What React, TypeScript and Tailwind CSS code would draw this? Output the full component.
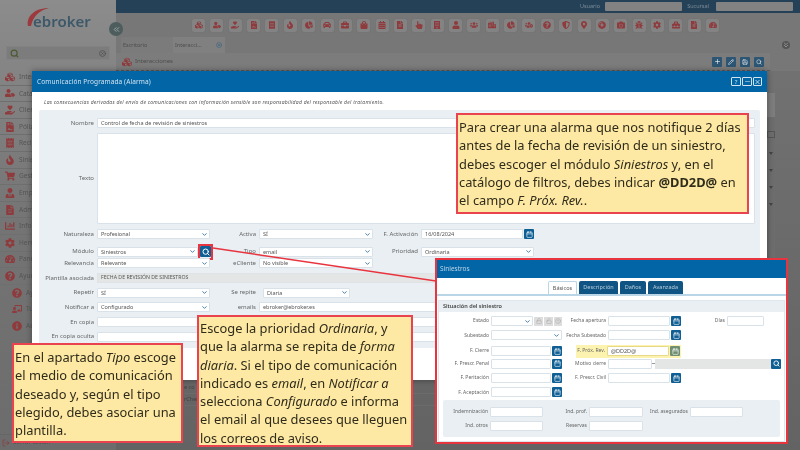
import type { ReactNode } from "react";
import { ChevronDown, Calendar, Search, Lock, Unlock, CircleHelp, X, Minus, Plus, Pencil, Save, ChevronsLeft, ChevronsDown, LogOut, CircleX } from "lucide-react";
import {
  FaCubes, FaUserTag, FaHandHoldingHeart, FaFileContract, FaReceipt, FaFire, FaChartPie, FaCar, FaBriefcase, FaShoppingBag,
  FaCalendarAlt, FaHandPointer, FaBuilding, FaUser, FaUsers, FaCity, FaUsersCog, FaQuestionCircle, FaShieldAlt, FaMapMarkerAlt,
  FaCompactDisc, FaCamera, FaBug, FaCog, FaToolbox, FaFileAlt, FaTachometerAlt, FaChartBar, FaShoppingCart, FaInfoCircle, FaChalkboardTeacher, FaUserTie,
} from "react-icons/fa";

const toolbarIcons = [
  FaCubes, FaUserTag, FaHandHoldingHeart, FaFileContract, FaReceipt, FaFire, FaChartPie, FaCar, FaBriefcase, FaShoppingBag,
  FaCalendarAlt, FaFileAlt, FaHandPointer, FaBuilding, FaUser, FaUsers, FaCity, FaChartPie, FaUsersCog, FaQuestionCircle,
  FaShieldAlt, FaMapMarkerAlt, FaCompactDisc, FaCamera, FaBug, FaCog, FaToolbox, FaFileAlt, FaTachometerAlt,
];

const menu = [
  { icon: FaCubes, label: "Interacciones" },
  { icon: FaUserTag, label: "Catálogos" },
  { icon: FaHandHoldingHeart, label: "Clientes" },
  { icon: FaFileContract, label: "Pólizas" },
  { icon: FaReceipt, label: "Recibos" },
  { icon: FaFire, label: "Siniestros" },
  { icon: FaShoppingCart, label: "Gestión" },
  { icon: FaUserTie, label: "Empresas" },
  { icon: FaFileAlt, label: "Administración" },
  { icon: FaChartBar, label: "Informes" },
  { icon: FaCog, label: "Herramientas" },
  { icon: FaTachometerAlt, label: "Panel" },
  { icon: FaQuestionCircle, label: "Ayuda" },
];

const subMenu = [
  { icon: FaQuestionCircle, label: "Ayuda" },
  { icon: FaChalkboardTeacher, label: "Tutoriales" },
  { icon: FaInfoCircle, label: "Acerca de" },
];

function Select({ value, className = "w-full" }: { value?: string; className?: string }) {
  return (
    <div className={`flex h-[10px] items-center justify-between rounded-[1px] border border-[#d9e2e8] bg-white pl-[3px] pr-[1px] text-[5.5px] text-[#555] ${className}`}>
      <span>{value}</span>
      <ChevronDown size={7} strokeWidth={3} className="text-[#2f6f9f]" />
    </div>
  );
}

function Input({ value, className = "w-full" }: { value?: string; className?: string }) {
  return (
    <div className={`flex h-[10px] items-center rounded-[1px] border border-[#d9e2e8] bg-white pl-[3px] text-[5.5px] text-[#555] ${className}`}>
      {value}
    </div>
  );
}

function IconBtn({ children, className = "" }: { children: ReactNode; className?: string }) {
  return (
    <div className={`flex h-[10px] w-[10px] shrink-0 items-center justify-center rounded-[1px] bg-[#0f5f94] text-white ${className}`}>
      {children}
    </div>
  );
}

function Label({ children }: { children: ReactNode }) {
  return <span className="whitespace-nowrap pr-[3px] text-right text-[6px] text-[#666]">{children}</span>;
}

function ClaimLabel({ children }: { children: ReactNode }) {
  return <span className="whitespace-nowrap pr-[2px] text-right text-[5px] text-[#666]">{children}</span>;
}

const modalRow = "grid h-[10px] grid-cols-[58px_113px_49px_114px_48px_113px] items-center";
const claimRow = "grid h-[10px] grid-cols-[52px_71px_46px_73px_46px_37px] items-center";
const claimAmounts = "grid h-[10px] grid-cols-[47px_53px_46px_54px_47px_53px] items-center";

function DateField({ value }: { value?: string }) {
  return (
    <div className="flex items-center gap-[1px]">
      <Input value={value} />
      <IconBtn>
        <Calendar size={7} />
      </IconBtn>
    </div>
  );
}

function Sidebar() {
  return (
    <aside className="flex w-[116px] shrink-0 flex-col bg-gradient-to-b from-[#8c8c8c] via-[#747474] to-[#6c6c6c]">
      <div className="relative flex h-[46px] shrink-0 pl-[33px] pt-[9px]">
        <svg width="24" height="22" viewBox="0 0 24 22" className="absolute left-[26px] top-[7px]">
          <path d="M2 19C0 10 8 1 23 1C14 3 7 9 5 19Z" fill="#9c3a3d" />
        </svg>
        <span className="text-[15px] font-semibold leading-[24px] text-[#3c5869]">ebroker</span>
      </div>
      <div className="mx-[6px] flex h-[14px] shrink-0 items-center justify-between border border-[#828282] bg-[#7c7c7c] px-[3px]">
        <Search size={9} strokeWidth={3} className="text-[#4a5a30]" />
        <CircleX size={7} className="text-[#444]" />
      </div>
      <nav className="mt-[9px] flex flex-col">
        {menu.map(({ icon: Icon, label }) => (
          <div key={label} className="flex h-[16.6px] items-center gap-[4px] border-b border-[#6f6f6f] pl-[5px] text-[6.5px] text-[#555]">
            <Icon size={10} className="text-[#8f3a3c]" />
            {label}
          </div>
        ))}
        {subMenu.map(({ icon: Icon, label }) => (
          <div key={label} className="flex h-[16.4px] items-center gap-[4px] pl-[12px] text-[6.5px] text-[#555]">
            <Icon size={10} className="text-[#8f3a3c]" />
            {label}
          </div>
        ))}
      </nav>
      <div className="mt-auto flex h-[16px] items-center gap-[3px] border-t border-[#666] pl-[2px] text-[6px] text-[#4c4c4c]">
        <LogOut size={8} className="text-[#8f3a3c]" />
        Cerrar sesión
      </div>
    </aside>
  );
}

function MainBackground() {
  return (
    <main className="flex min-w-0 flex-1 flex-col bg-[#777]">
      <div className="flex h-[13px] shrink-0 items-center justify-end gap-[3px] bg-[#254158] pr-[7px] text-[5.5px] text-[#7d8d9a]">
        <span className="mr-[2px]">Usuario</span>
        <div className="h-[9px] w-[77px] rounded-[1px] bg-[#828282]" />
        <span className="ml-[2px] mr-[4px]">Sucursal</span>
        <div className="h-[9px] w-[77px] rounded-[1px] bg-[#828282]" />
      </div>
      <div className="flex h-[24px] shrink-0 items-center gap-[5.36px] pl-[76px]">
        {toolbarIcons.map((Icon, i) => (
          <div key={i} className="flex h-[13px] w-[13px] items-center justify-center rounded-[2px] bg-[#838383] shadow-[0_0_1px_#666]">
            <Icon size={8} className="text-[#8f3a3c]" />
          </div>
        ))}
      </div>
      <div className="flex h-[16px] shrink-0 items-center pl-[5px] text-[5.5px] text-[#4d4d4d]">
        <div className="flex h-full w-[52px] items-center bg-[#7b7b7b] pl-[2px]">Escritorio</div>
        <div className="flex h-full w-[52px] items-center justify-between bg-[#808080] pl-[2px] pr-[3px]">
          Interacci...
          <CircleX size={6} className="text-[#2f5f80]" />
        </div>
        <ChevronsDown size={8} className="ml-auto mr-[10px] rounded-full bg-[#555] text-[#aaa]" />
      </div>
      <div className="mr-[30px] flex h-[18px] shrink-0 items-center gap-[3px] border-b border-dashed border-[#5c5c5c] bg-[#7c7c7c] pl-[6px] text-[6px] text-[#4d4d4d]">
        <FaCubes size={10} className="text-[#8f3a3c]" />
        Interacciones
        <div className="ml-auto flex gap-[4px] pr-[6px]">
          <IconBtn className="bg-[#2c5673]"><Plus size={7} /></IconBtn>
          <IconBtn className="bg-[#2c5673]"><Pencil size={6} /></IconBtn>
          <IconBtn className="bg-[#2c5673]"><Save size={6} /></IconBtn>
          <IconBtn className="bg-[#2c5673]"><Search size={6} /></IconBtn>
        </div>
      </div>
      <div className="flex flex-1 bg-gradient-to-b from-[#717171] to-[#636363]">
        <div className="flex-1 pl-[68px] pt-[311px] text-[5.5px] text-[#3f3f3f]">
          <div className="flex h-[12px] w-[300px] items-center border-b border-[#6b6b6b]">e co</div>
          <div className="flex h-[12px] w-[300px] items-center border-b border-[#6b6b6b]">rChen</div>
        </div>
        <div className="mr-[25px] mt-[22px] flex h-[170px] w-[8px] flex-col items-center gap-[14px] bg-[#6d6d6d]">
          <div className="h-[24px] w-full bg-[#7d7d7d]" />
          <div className="h-[7px] w-full border border-[#555]" />
          <div className="h-0 w-0 border-x-[2px] border-t-[3px] border-x-transparent border-t-[#444]" />
          <div className="h-0 w-0 border-x-[2px] border-t-[3px] border-x-transparent border-t-[#444]" />
          <div className="h-0 w-0 border-x-[2px] border-t-[3px] border-x-transparent border-t-[#444]" />
          <div className="h-0 w-0 border-x-[2px] border-t-[3px] border-x-transparent border-t-[#444]" />
        </div>
      </div>
    </main>
  );
}

function AlarmModal() {
  return (
    <section className="absolute left-[32px] top-[71px] h-[309px] w-[735px] bg-white shadow-[0_0_6px_rgba(0,0,0,0.4)]">
      <header className="flex h-[21px] items-center justify-between bg-[#0265a6] pl-[5px] pr-[5px] text-[6.5px] tracking-[0.1px] text-[#d3e4f0]">
        Comunicación Programada (Alarma)
        <div className="flex gap-[1px] text-[#d3e4f0]">
          <div className="flex h-[9px] w-[10px] items-center justify-center rounded-[1px] border border-[#d3e4f0] text-[6px] leading-none">?</div>
          <div className="flex h-[9px] w-[10px] items-end justify-center rounded-[1px] border border-[#d3e4f0]"><Minus size={7} /></div>
          <div className="flex h-[9px] w-[9px] items-center justify-center rounded-[1px] border border-[#d3e4f0]"><X size={8} strokeWidth={3} /></div>
        </div>
      </header>
      <p className="pl-[12px] pt-[7px] text-[5.1px] italic leading-[7px] tracking-[0.23px] text-[#555]">
        Las consecuencias derivadas del envío de comunicaciones con información sensible son responsabilidad del responsable del tratamiento.
      </p>
      <div className="ml-[7px] mt-[4px] flex h-[238px] w-[721px] flex-col rounded-[2px] bg-[#e9eff3] pt-[8px]">
        <div className="flex h-[10px] items-center">
          <div className="flex w-[58px] justify-end"><Label>Nombre</Label></div>
          <Input value="Control de fecha de revisión de siniestros" className="w-[658px]" />
        </div>
        <div className="mt-[5px] flex h-[91px] items-center">
          <div className="flex w-[58px] justify-end"><Label>Texto</Label></div>
          <div className="h-full w-[658px] rounded-[1px] border border-[#d9e2e8] bg-white" />
        </div>
        <div className="mt-[5px] flex flex-col gap-[4.7px]">
          <div className={modalRow}>
            <Label>Naturaleza</Label>
            <Select value="Profesional" />
            <Label>Activa</Label>
            <Select value="SÍ" />
            <Label>F. Activación</Label>
            <DateField value="16/08/2024" />
          </div>
          <div className={modalRow}>
            <Label>Módulo</Label>
            <div className="flex items-center">
              <Select value="Siniestros" className="w-[101px] shrink-0" />
              <div className="flex h-[16px] w-[15px] shrink-0 items-center justify-center border-2 border-[#e8343f]">
                <IconBtn className="h-[11px] w-[11px]"><Search size={8} strokeWidth={3} /></IconBtn>
              </div>
            </div>
            <Label>Tipo</Label>
            <Select value="email" />
            <Label>Prioridad</Label>
            <Select value="Ordinaria" />
          </div>
          <div className={modalRow}>
            <Label>Relevancia</Label>
            <Select value="Relevante" />
            <Label>eCliente</Label>
            <Select value="No visible" />
          </div>
          <div className={modalRow}>
            <Label>Plantilla asociada</Label>
            <div className="col-span-5 flex h-[10px] w-[658px] items-center border border-[#dfe3e5] bg-[#e4e6e6] pl-[3px] text-[5.2px] text-[#555]">
              FECHA DE REVISIÓN DE SINIESTROS
            </div>
          </div>
          <div className={modalRow}>
            <Label>Repetir</Label>
            <Select value="SÍ" />
            <Label>Se repite</Label>
            <Select value="Diaria" className="ml-[4px] w-[87px]" />
          </div>
          <div className={modalRow}>
            <Label>Notificar a</Label>
            <Select value="Configurado" />
            <Label>emails</Label>
            <Input value="ebroker@ebroker.es" className="col-span-3 w-[496px]" />
          </div>
          <div className={modalRow}>
            <Label>En copia</Label>
            <Input className="col-span-5 w-[658px]" />
          </div>
          <div className={modalRow}>
            <Label>En copia oculta</Label>
            <Input className="col-span-5 w-[658px]" />
          </div>
        </div>
      </div>
    </section>
  );
}

function ClaimWindow() {
  return (
    <section className="absolute left-[435px] top-[258px] flex h-[186px] w-[353px] flex-col border-2 border-[#e8343f] bg-white">
      <header className="flex h-[18px] shrink-0 items-center bg-[#0265a6] pl-[3px] text-[6.5px] text-[#bcd6e8]">Siniestros</header>
      <div className="flex h-[18px] shrink-0 items-end justify-center gap-[2px] border-b-2 border-[#b9d5e6] pl-[8px] text-[5.5px]">
        <div className="flex h-[13px] w-[29px] items-center justify-center rounded-t-[2px] border border-b-0 border-[#b9d5e6] text-[#555]">Básicos</div>
        <div className="flex h-[13px] w-[39px] items-center justify-center rounded-t-[2px] bg-[#0f5483] text-[#b9cfdd]">Descripción</div>
        <div className="flex h-[13px] w-[26px] items-center justify-center rounded-t-[2px] bg-[#0f5483] text-[#b9cfdd]">Daños</div>
        <div className="flex h-[13px] w-[35px] items-center justify-center rounded-t-[2px] bg-[#0f5483] text-[#b9cfdd]">Avanzada</div>
      </div>
      <div className="mx-[1px] mt-[4px] flex flex-1 flex-col border border-[#dfe7ec]">
        <div className="flex h-[11px] shrink-0 items-center bg-[#e9eff3] pl-[4px] text-[5.5px] font-semibold text-[#444]">Situación del siniestro</div>
        <div className="mt-[4px] flex flex-col gap-[4.3px]">
          <div className={claimRow}>
            <ClaimLabel>Estado</ClaimLabel>
            <div className="flex items-center gap-[1px]">
              <Select className="w-[42px]" />
              <div className="flex h-[9px] w-[9px] items-center justify-center bg-[#ddd]"><Lock size={6} className="text-[#aaa]" /></div>
              <div className="flex h-[9px] w-[9px] items-center justify-center bg-[#ddd]"><Unlock size={6} className="text-[#aaa]" /></div>
              <div className="flex h-[9px] w-[8px] items-center justify-center bg-[#ddd]"><CircleHelp size={6} className="text-[#aaa]" /></div>
            </div>
            <ClaimLabel>Fecha apertura</ClaimLabel>
            <DateField />
            <ClaimLabel>Días</ClaimLabel>
            <Input />
          </div>
          <div className={claimRow}>
            <ClaimLabel>Subestado</ClaimLabel>
            <Select />
            <ClaimLabel>Fecha Subestado</ClaimLabel>
            <DateField />
          </div>
          <div className={claimRow}>
            <ClaimLabel>F. Cierre</ClaimLabel>
            <DateField />
            <div className="col-span-2 ml-[14px] flex h-[13px] items-center justify-end bg-[#fdf3b0] pr-[1px]">
              <ClaimLabel>F. Próx. Rev.</ClaimLabel>
              <div className="flex w-[73px] items-center gap-[1px]">
                <Input value="@DD2D@" className="w-full border-[#e8d98a] bg-[#fdf3b0]" />
                <IconBtn className="bg-[#6f8f70]"><Calendar size={7} /></IconBtn>
              </div>
            </div>
          </div>
          <div className={claimRow}>
            <ClaimLabel>F. Prescr. Penal</ClaimLabel>
            <DateField />
            <ClaimLabel>Motivo cierre</ClaimLabel>
            <div className="col-span-3 flex items-center">
              <Input className="w-[44px] shrink-0" />
              <span className="w-[3px] shrink-0 border-t border-[#999]" />
              <div className="h-[10px] w-[116px] shrink-0 bg-[#e4e6e6]" />
              <IconBtn><Search size={7} strokeWidth={3} /></IconBtn>
            </div>
          </div>
          <div className={claimRow}>
            <ClaimLabel>F. Peritación</ClaimLabel>
            <DateField />
            <ClaimLabel>F. Prescr. Civil</ClaimLabel>
            <DateField />
          </div>
          <div className={claimRow}>
            <ClaimLabel>F. Aceptación</ClaimLabel>
            <DateField />
          </div>
        </div>
        <div className="mx-[4px] mt-[3px] flex h-[37px] flex-col justify-center gap-[4px] rounded-[2px] bg-[#e9eff3]">
          <div className={claimAmounts}>
            <ClaimLabel>Indemnización</ClaimLabel>
            <Input />
            <ClaimLabel>Ind. prof.</ClaimLabel>
            <Input />
            <ClaimLabel>Ind. asegurados</ClaimLabel>
            <Input />
          </div>
          <div className={claimAmounts}>
            <ClaimLabel>Ind. otros</ClaimLabel>
            <Input />
            <ClaimLabel>Reservas</ClaimLabel>
            <Input />
          </div>
        </div>
      </div>
    </section>
  );
}

function Callout({ className, children }: { className: string; children: ReactNode }) {
  return (
    <div className={`absolute border-2 border-[#e8434e] bg-[#fde9a3] pl-[1px] text-[12.85px] leading-[18.3px] text-[#302c1c] ${className}`}>
      {children}
    </div>
  );
}

export default function App() {
  return (
    <div className="relative flex h-[450px] w-[800px] overflow-hidden font-['Open_Sans','Liberation_Sans',sans-serif] blur-[0.3px]">
      <Sidebar />
      <MainBackground />
      <div className="absolute left-[109px] top-[22px] flex h-[14px] w-[14px] items-center justify-center rounded-full bg-[#4d5c5c] text-[#b5bdbd]">
        <ChevronsLeft size={9} />
      </div>

      <AlarmModal />

      <svg width="800" height="450" className="pointer-events-none absolute left-0 top-0">
        <line x1="213" y1="248" x2="436" y2="281" stroke="#e8343f" strokeWidth="1.4" />
      </svg>

      <ClaimWindow />

      <Callout className="left-[456px] top-[113px] h-[101px] w-[293px] pt-[3px]">
        Para crear una alarma que nos notifique 2 días<br />
        antes de la fecha de revisión de un siniestro,<br />
        debes escoger el módulo <em>Siniestros</em> y, en el<br />
        catálogo de filtros, debes indicar <strong>@DD2D@</strong> en<br />
        el campo <em>F. Próx. Rev.</em>.
      </Callout>
      <Callout className="left-[12px] top-[343px] h-[100px] w-[171px] pt-[3px]">
        En el apartado <em>Tipo</em> escoge<br />
        el medio de comunicación<br />
        deseado y, según el tipo<br />
        elegido, debes asociar una<br />
        plantilla.
      </Callout>
      <Callout className="left-[197px] top-[315px] h-[132px] w-[216px] pt-[2px]">
        Escoge la prioridad <em>Ordinaria</em>, y<br />
        que la alarma se repita de <em>forma</em><br />
        <em>diaria</em>. Si el tipo de comunicación<br />
        indicado es <em>email</em>, en <em>Notificar a</em><br />
        selecciona <em>Configurado</em> e informa<br />
        el email al que desees que lleguen<br />
        los correos de aviso.
      </Callout>
    </div>
  );
}
